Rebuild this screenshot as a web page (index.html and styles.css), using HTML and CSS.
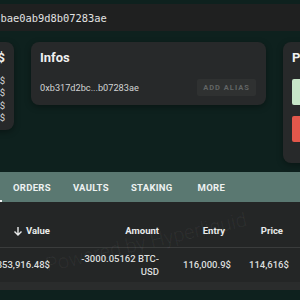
FILE: index.html
```html
<!DOCTYPE html>
<html lang="en">
<head>
    <meta charset="UTF-8">
    <meta name="viewport" content="width=device-width, initial-scale=1.0">
    <title>Wallet - 0xb317d2bc...b07283ae</title>
    <link rel="stylesheet" href="styles.css">
</head>
<body>
    <div class="page">
        <header class="topbar">
            <span class="addr">0xb317d2bc2d3d2df5fa441b5bae0ab9d8b07283ae</span>
        </header>

        <section class="cards">
            <div class="card summary">
                <div class="card-title">$</div>
                <ul class="summary-list">
                    <li>$</li>
                    <li>$</li>
                    <li>$</li>
                    <li>$</li>
                </ul>
            </div>
            <div class="card infos">
                <h2 class="card-title">Infos</h2>
                <div class="info-row">
                    <span class="info-addr">0xb317d2bc...b07283ae</span>
                    <button class="btn-alias">Add alias</button>
                </div>
            </div>
            <div class="card pnl">
                <h2 class="card-title">P</h2>
                <div class="pnl-bar long"></div>
                <div class="pnl-bar short"></div>
            </div>
        </section>

        <nav class="tabs">
            <div class="tab active">Positions</div>
            <div class="tab">Orders</div>
            <div class="tab">Vaults</div>
            <div class="tab">Staking</div>
            <div class="tab more">More</div>
        </nav>

        <div class="table">
            <div class="table-row table-head">
                <div class="cell">
                    <svg class="sort-icon" viewBox="0 0 10 10" width="10" height="10">
                        <path d="M5 1v8M1.5 5.5L5 9l3.5-3.5" fill="none" stroke="currentColor" stroke-width="1.4"/>
                    </svg>
                    Value
                </div>
                <div class="cell">Amount</div>
                <div class="cell">Entry</div>
                <div class="cell">Price</div>
                <div class="cell"></div>
            </div>
            <div class="table-row">
                <div class="cell">353,916.48$</div>
                <div class="cell amount">-3000.05162 BTC-USD</div>
                <div class="cell">116,000.9$</div>
                <div class="cell">114,616$</div>
                <div class="cell"></div>
            </div>
            <div class="table-foot"></div>
            <div class="watermark">Powered by Hyperliquid</div>
        </div>
    </div>
</body>
</html>
```

FILE: styles.css
```css
* {
    margin: 0;
    padding: 0;
    box-sizing: border-box;
}

body {
    font-family: Roboto, 'Liberation Sans', Arial, sans-serif;
    background-color: #0e211e;
    color: #e4e6e6;
    width: 300px;
    height: 300px;
    overflow: hidden;
}

.page {
    padding-top: 4px;
}

.topbar {
    height: 27px;
    background: #1f2020;
    display: flex;
    align-items: center;
    white-space: nowrap;
    overflow: hidden;
}

.addr {
    font-family: 'DejaVu Sans Mono', 'Liberation Mono', monospace;
    font-size: 10.4px;
    color: #e2e2e2;
    margin-left: -156px;
}

.cards {
    display: flex;
    align-items: flex-start;
    gap: 17px;
    margin-top: 11px;
}

.card {
    background: #27292a;
    border-radius: 8px;
    padding: 8px 9px;
    box-shadow: 0 2px 6px rgba(0, 0, 0, 0.35);
    flex-shrink: 0;
}

.card-title {
    font-size: 13px;
    font-weight: 700;
    line-height: 16px;
    color: #f0f0f0;
}

.summary {
    width: 110px;
    margin-left: -96px;
    text-align: right;
    padding-bottom: 6px;
}

.summary-list {
    list-style: none;
    margin-top: 9px;
    font-size: 9.5px;
    line-height: 12.3px;
    color: #d6d6d6;
}

.infos {
    width: 235px;
    padding-right: 10px;
    padding-bottom: 9px;
}

.info-row {
    display: flex;
    justify-content: space-between;
    align-items: center;
    margin-top: 13px;
}

.info-addr {
    font-size: 9.2px;
    color: #d2d4d4;
}

.btn-alias {
    border: none;
    background: #2f3131;
    color: #626565;
    font-family: inherit;
    font-size: 7.5px;
    font-weight: 700;
    letter-spacing: 1px;
    text-transform: uppercase;
    height: 17px;
    width: 59px;
    border-radius: 2px;
}

.pnl {
    width: 100px;
    padding-bottom: 21px;
}

.pnl-bar {
    height: 26px;
    border-radius: 2px 0 0 2px;
}

.pnl-bar.long {
    background: #c6e6c8;
    margin-top: 13px;
}

.pnl-bar.short {
    background: #e2574b;
    margin-top: 11px;
}

.tabs {
    display: flex;
    height: 30px;
    margin-top: 9px;
    margin-left: -80px;
    background: #5a7871;
}

.tab {
    position: relative;
    display: flex;
    align-items: center;
    padding: 0 11px;
    font-size: 9.5px;
    font-weight: 700;
    letter-spacing: 0.3px;
    text-transform: uppercase;
    color: #eef2f1;
}

.tab.active {
    width: 82px;
    color: transparent;
}

.tab.active::after {
    content: "";
    position: absolute;
    left: 0;
    right: 0;
    bottom: 0;
    height: 2px;
    background: #f2f4f4;
}

.tab.more {
    padding-left: 14px;
}

.table {
    position: relative;
    background: #242626;
    overflow: hidden;
}

.table-row {
    display: grid;
    grid-template-columns: 100px 109px 66px 58px 1fr;
    margin-left: -50px;
    align-items: center;
    font-size: 9.5px;
    color: #dcdede;
}

.table-head {
    height: 46px;
    padding-top: 22px;
    padding-bottom: 12px;
    font-weight: 700;
    color: #e8eaea;
    border-bottom: 1px solid #3a3c3c;
}

.table-row .cell {
    text-align: right;
    padding-left: 24px;
    line-height: 13.5px;
}

.table-head .cell:first-child {
    display: flex;
    justify-content: flex-end;
    align-items: center;
    gap: 3px;
}

.sort-icon {
    color: #e8eaea;
}

.table-row:not(.table-head) {
    height: 34px;
    font-weight: 500;
}

.table-foot {
    height: 8px;
    background: #2a2c2c;
}

.watermark {
    position: absolute;
    left: 36px;
    top: 28px;
    width: 220px;
    text-align: center;
    font-size: 20px;
    font-weight: 300;
    line-height: 24px;
    white-space: nowrap;
    color: rgba(255, 255, 255, 0.06);
    transform: rotate(-13deg);
    pointer-events: none;
}
```
